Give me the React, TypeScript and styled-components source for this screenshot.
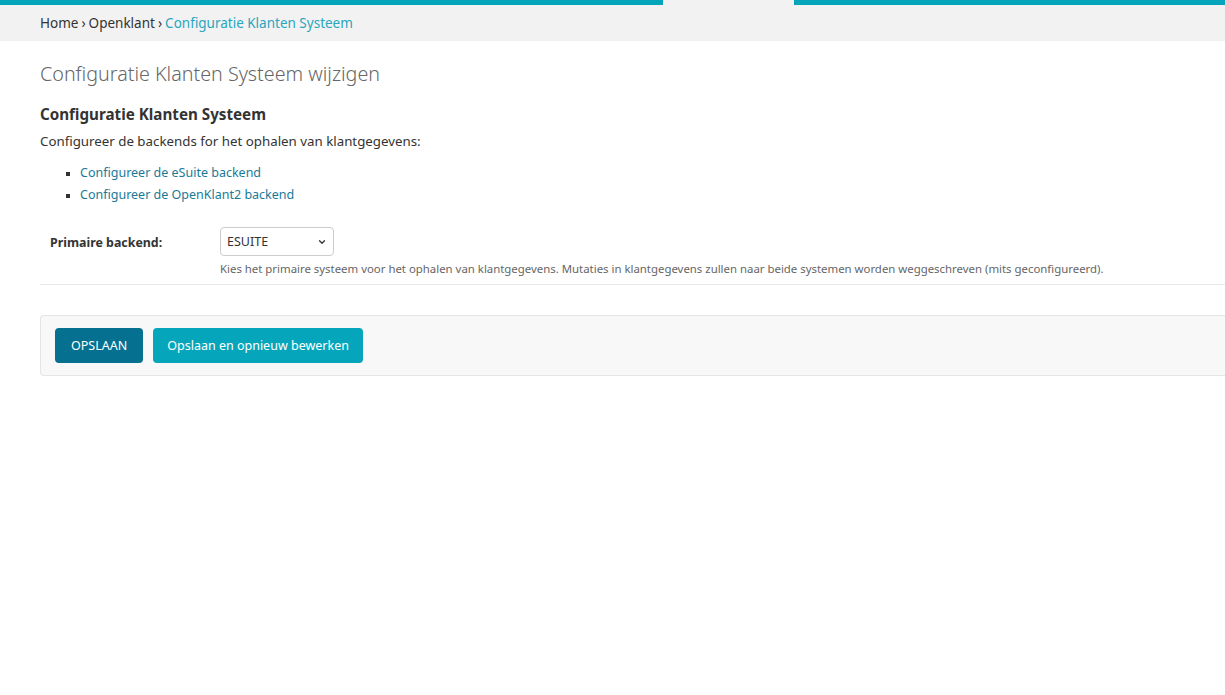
import React from 'react';
import styled, { createGlobalStyle } from 'styled-components';
import { ChevronDown } from 'lucide-react';

const GlobalStyle = createGlobalStyle`
  html, body {
    margin: 0;
    padding: 0;
    background: #fff;
    overflow: hidden;
  }
  body {
    font-family: 'Noto Sans', 'Open Sans', sans-serif;
    color: #333;
  }
`;

// Styles
const TopStripe = styled.div`
  display: flex;
  height: 5px;
  background: #f2f2f2;

  .seg {
    background: #04a5bb;
  }
  .left {
    width: 663px;
  }
  .right {
    margin-left: 131px;
    flex: 1;
  }
`;

const Breadcrumbs = styled.div`
  background: #f2f2f2;
  height: 36px;
  padding: 0 40px;
  display: flex;
  align-items: center;
  font-size: 13.5px;
  color: #333;

  span.sep {
    margin: 0 3px;
  }
  a {
    color: #29a6be;
    text-decoration: none;
  }
`;

const Content = styled.main`
  padding: 19px 0 0 40px;
`;

const PageTitle = styled.h1`
  margin: 0 0 17px;
  font-size: 19.7px;
  font-weight: 300;
  color: #666;
`;

const SectionTitle = styled.h2`
  margin: 0 0 8px;
  font-size: 15.2px;
  font-weight: 700;
  color: #333;
`;

const Intro = styled.p`
  margin: 0 0 12px;
  font-size: 13.3px;
  color: #333;
`;

const LinkList = styled.ul`
  margin: 0 0 21px;
  padding-left: 40px;
  list-style: square;
  font-size: 12.5px;
  line-height: 22px;

  li::marker {
    color: #333;
    font-size: 10px;
  }
  a {
    color: #197a98;
    text-decoration: none;
  }
`;

const FormRow = styled.div`
  display: flex;
  padding: 0 0 8px 10px;
  border-bottom: 1px solid #e8e8e8;
`;

const Label = styled.label`
  width: 170px;
  font-size: 12.4px;
  font-weight: 700;
  color: #333;
  padding-top: 7px;
`;

const Field = styled.div`
  display: flex;
  flex-direction: column;
  align-items: flex-start;
  gap: 5px;
`;

const SelectWrap = styled.div`
  position: relative;
  width: 114px;

  svg {
    position: absolute;
    right: 7px;
    top: 10px;
    pointer-events: none;
    color: #333;
  }
`;

const Select = styled.select`
  appearance: none;
  width: 100%;
  height: 29px;
  border: 1px solid #ccc;
  border-radius: 4px;
  background: #fff;
  font-family: inherit;
  font-size: 12.5px;
  color: #333;
  padding: 0 6px;
`;

const Help = styled.div`
  font-size: 11.4px;
  color: #666;
`;

const SubmitRow = styled.div`
  margin-top: 30px;
  display: flex;
  gap: 10px;
  padding: 12px 14px;
  background: #f8f8f8;
  border: 1px solid #e5e5e5;
  border-right: none;
  border-radius: 4px 0 0 4px;
`;

const Button = styled.button<{ $primary?: boolean }>`
  height: 35px;
  padding: 0 ${(p) => (p.$primary ? '16px' : '14px')};
  border: none;
  border-radius: 4px;
  font-family: inherit;
  font-size: 12.5px;
  color: #fff;
  background: ${(p) => (p.$primary ? '#057090' : '#05a6bb')};
  text-transform: ${(p) => (p.$primary ? 'uppercase' : 'none')};
  cursor: pointer;
`;

const App: React.FC = () => {
  return (
    <>
      <GlobalStyle />
      <TopStripe>
        <div className="seg left" />
        <div className="seg right" />
      </TopStripe>
      <Breadcrumbs>
        Home<span className="sep">›</span>Openklant<span className="sep">›</span>
        <a href="#">Configuratie Klanten Systeem</a>
      </Breadcrumbs>
      <Content>
        <PageTitle>Configuratie Klanten Systeem wijzigen</PageTitle>
        <SectionTitle>Configuratie Klanten Systeem</SectionTitle>
        <Intro>Configureer de backends for het ophalen van klantgegevens:</Intro>
        <LinkList>
          <li>
            <a href="#">Configureer de eSuite backend</a>
          </li>
          <li>
            <a href="#">Configureer de OpenKlant2 backend</a>
          </li>
        </LinkList>
        <FormRow>
          <Label htmlFor="primary">Primaire backend:</Label>
          <Field>
            <SelectWrap>
              <Select id="primary" defaultValue="esuite">
                <option value="esuite">ESUITE</option>
                <option value="openklant2">OPENKLANT2</option>
              </Select>
              <ChevronDown size={10} strokeWidth={3} />
            </SelectWrap>
            <Help>
              Kies het primaire systeem voor het ophalen van klantgegevens. Mutaties in klantgegevens
              zullen naar beide systemen worden weggeschreven (mits geconfigureerd).
            </Help>
          </Field>
        </FormRow>
        <SubmitRow>
          <Button $primary>Opslaan</Button>
          <Button>Opslaan en opnieuw bewerken</Button>
        </SubmitRow>
      </Content>
    </>
  );
};

export default App;
